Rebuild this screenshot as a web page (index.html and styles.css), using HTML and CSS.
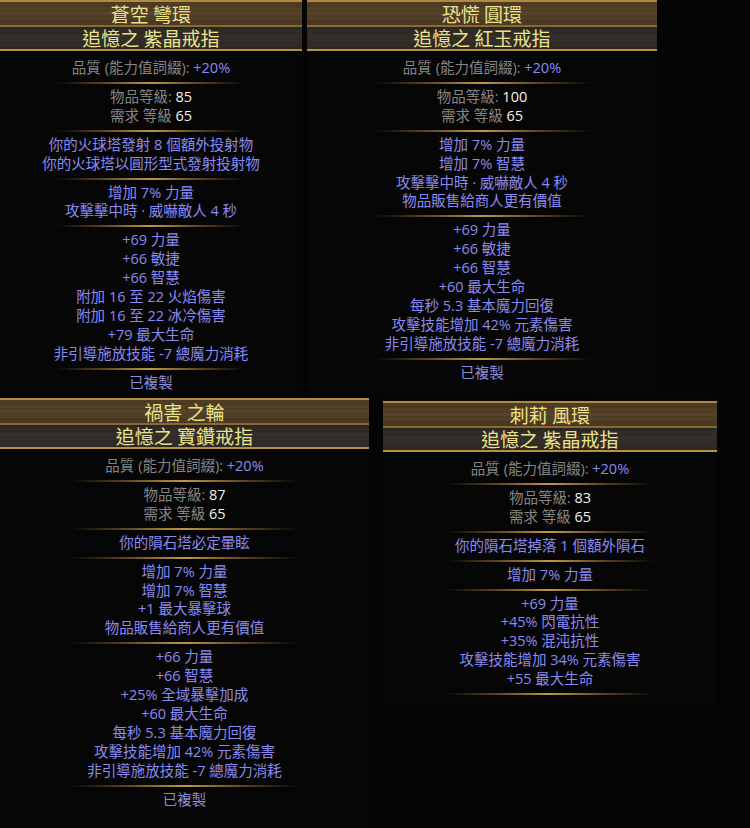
FILE: index.html
```html
<!DOCTYPE html>
<html lang="zh-Hant">
<head>
<meta charset="utf-8">
<title>Items</title>
<link rel="stylesheet" href="styles.css">
</head>
<body>
<div class="canvas">
  <div class="row row-top">
    <div class="tip tip-a">
      <div class="head">
        <div class="name"><span class="ht">蒼空 彎環</span></div>
        <div class="base"><span class="ht">追憶之 紫晶戒指</span></div>
      </div>
      <div class="body">
        <div class="line"><span class="k">品質 (能力值詞綴): </span><span class="m">+20%</span></div>
        <div class="sep"></div>
        <div class="line"><span class="k">物品等級: </span><span class="w">85</span></div>
        <div class="line"><span class="k">需求 等級 </span><span class="w">65</span></div>
        <div class="sep"></div>
        <div class="line m">你的火球塔發射 8 個額外投射物</div>
        <div class="line m">你的火球塔以圓形型式發射投射物</div>
        <div class="sep"></div>
        <div class="line m">增加 7% 力量</div>
        <div class="line m">攻擊擊中時 · 威嚇敵人 4 秒</div>
        <div class="sep"></div>
        <div class="line m">+69 力量</div>
        <div class="line m">+66 敏捷</div>
        <div class="line m">+66 智慧</div>
        <div class="line m">附加 16 至 22 火焰傷害</div>
        <div class="line m">附加 16 至 22 冰冷傷害</div>
        <div class="line m">+79 最大生命</div>
        <div class="line m">非引導施放技能 -7 總魔力消耗</div>
        <div class="sep"></div>
        <div class="line c">已複製</div>
      </div>
    </div>
    <div class="tip tip-b">
      <div class="head">
        <div class="name"><span class="ht">恐慌 圓環</span></div>
        <div class="base"><span class="ht">追憶之 紅玉戒指</span></div>
      </div>
      <div class="body">
        <div class="line"><span class="k">品質 (能力值詞綴): </span><span class="m">+20%</span></div>
        <div class="sep"></div>
        <div class="line"><span class="k">物品等級: </span><span class="w">100</span></div>
        <div class="line"><span class="k">需求 等級 </span><span class="w">65</span></div>
        <div class="sep"></div>
        <div class="line m">增加 7% 力量</div>
        <div class="line m">增加 7% 智慧</div>
        <div class="line m">攻擊擊中時 · 威嚇敵人 4 秒</div>
        <div class="line m">物品販售給商人更有價值</div>
        <div class="sep"></div>
        <div class="line m">+69 力量</div>
        <div class="line m">+66 敏捷</div>
        <div class="line m">+66 智慧</div>
        <div class="line m">+60 最大生命</div>
        <div class="line m">每秒 5.3 基本魔力回復</div>
        <div class="line m">攻擊技能增加 42% 元素傷害</div>
        <div class="line m">非引導施放技能 -7 總魔力消耗</div>
        <div class="sep"></div>
        <div class="line c">已複製</div>
      </div>
    </div>
  </div>
  <div class="row row-bottom">
    <div class="tip tip-c">
      <div class="head">
        <div class="name"><span class="ht">禍害 之輪</span></div>
        <div class="base"><span class="ht">追憶之 寶鑽戒指</span></div>
      </div>
      <div class="body">
        <div class="line"><span class="k">品質 (能力值詞綴): </span><span class="m">+20%</span></div>
        <div class="sep"></div>
        <div class="line"><span class="k">物品等級: </span><span class="w">87</span></div>
        <div class="line"><span class="k">需求 等級 </span><span class="w">65</span></div>
        <div class="sep"></div>
        <div class="line m">你的隕石塔必定暈眩</div>
        <div class="sep"></div>
        <div class="line m">增加 7% 力量</div>
        <div class="line m">增加 7% 智慧</div>
        <div class="line m">+1 最大暴擊球</div>
        <div class="line m">物品販售給商人更有價值</div>
        <div class="sep"></div>
        <div class="line m">+66 力量</div>
        <div class="line m">+66 智慧</div>
        <div class="line m">+25% 全域暴擊加成</div>
        <div class="line m">+60 最大生命</div>
        <div class="line m">每秒 5.3 基本魔力回復</div>
        <div class="line m">攻擊技能增加 42% 元素傷害</div>
        <div class="line m">非引導施放技能 -7 總魔力消耗</div>
        <div class="sep"></div>
        <div class="line c">已複製</div>
      </div>
    </div>
    <div class="tip tip-d">
      <div class="head">
        <div class="name"><span class="ht">刺莉 風環</span></div>
        <div class="base"><span class="ht">追憶之 紫晶戒指</span></div>
      </div>
      <div class="body">
        <div class="line"><span class="k">品質 (能力值詞綴): </span><span class="m">+20%</span></div>
        <div class="sep"></div>
        <div class="line"><span class="k">物品等級: </span><span class="w">83</span></div>
        <div class="line"><span class="k">需求 等級 </span><span class="w">65</span></div>
        <div class="sep"></div>
        <div class="line m">你的隕石塔掉落 1 個額外隕石</div>
        <div class="sep"></div>
        <div class="line m">增加 7% 力量</div>
        <div class="sep"></div>
        <div class="line m">+69 力量</div>
        <div class="line m">+45% 閃電抗性</div>
        <div class="line m">+35% 混沌抗性</div>
        <div class="line m">攻擊技能增加 34% 元素傷害</div>
        <div class="line m">+55 最大生命</div>
        <div class="sep"></div>
      </div>
    </div>
  </div>
</div>
</body>
</html>
```

FILE: styles.css
```css
html, body {
  margin: 0;
  padding: 0;
  background: #040404;
}

body {
  width: 750px;
  height: 828px;
  overflow: hidden;
  font-family: "Open Sans", "Noto Sans CJK TC", sans-serif;
}

.canvas {
  display: flex;
  flex-direction: column;
  width: 750px;
  height: 828px;
}

.row {
  display: flex;
}

.row-top {
  height: 397px;
  gap: 5px;
  align-items: stretch;
}

.row-bottom {
  flex: 1;
  gap: 14px;
  align-items: stretch;
}

.tip {
  display: flex;
  flex-direction: column;
  background: #060606;
}

.tip-a { width: 302px; }
.tip-b { width: 350px; }
.tip-c { width: 369px; margin-top: 1px; }
.tip-d { width: 334px; margin-top: 4px; margin-bottom: 122px; }

.head {
  display: flex;
  flex-direction: column;
  border-top: 2px solid #b08a3e;
  border-bottom: 2px solid #b8913f;
  color: #ebe28c;
  font-family: "Noto Sans CJK TC", sans-serif;
  font-size: 19px;
  text-align: center;
}

.name {
  height: 23px;
  line-height: 23px;
  background:
    repeating-linear-gradient(180deg, rgba(0,0,0,0) 0px, rgba(0,0,0,0) 3px, rgba(0,0,0,0.14) 4px, rgba(0,0,0,0) 5px),
    linear-gradient(180deg, #4c3a23 0%, #58442a 50%, #483722 100%);
  border-bottom: 2px solid #8a6a32;
}

.base {
  height: 22px;
  line-height: 22px;
  background:
    repeating-linear-gradient(180deg, rgba(255,255,255,0) 0px, rgba(255,255,255,0) 3px, rgba(255,255,255,0.03) 4px, rgba(255,255,255,0) 5px),
    linear-gradient(180deg, #2a2622 0%, #322d28 50%, #2b2723 100%);
}

.ht {
  display: inline-block;
  height: 100%;
  vertical-align: top;
}

.body {
  flex: 1;
  display: flex;
  flex-direction: column;
  align-items: center;
  padding-top: 8px;
  font-size: 14.5px;
  line-height: 18.9px;
  text-align: center;
}

.line {
  white-space: nowrap;
}

.k { color: #858585; }
.w { color: #f0f0f0; }
.m { color: #8a8af2; }
.c { color: #8b8bd6; }

.sep {
  width: 62%;
  height: 2px;
  margin: 4px 0;
  background: linear-gradient(90deg, rgba(150,110,40,0) 0%, rgba(170,125,50,0.55) 25%, #c09548 50%, rgba(170,125,50,0.55) 75%, rgba(150,110,40,0) 100%);
}
```
